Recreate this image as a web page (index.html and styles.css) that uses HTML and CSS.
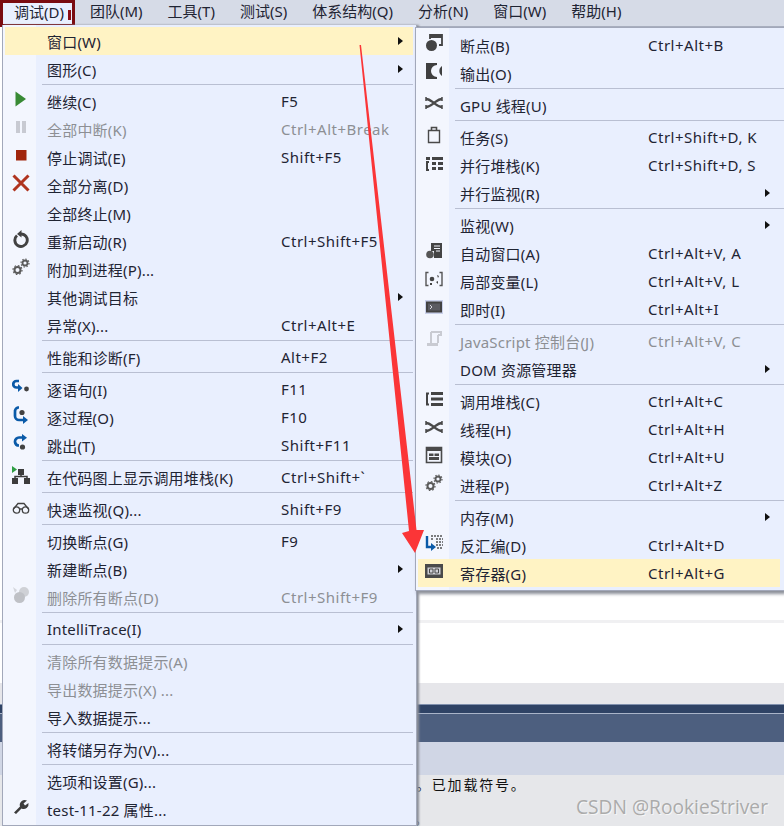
FILE: index.html
```html
<!DOCTYPE html>
<html lang="zh-CN">
<head>
<meta charset="utf-8">
<title>调试菜单</title>
<link rel="stylesheet" href="styles.css">
</head>
<body>
<svg class="defs" width="0" height="0" aria-hidden="true">
  <symbol id="gears" viewBox="0 0 18 18">
    <g fill="none" stroke="#5a5a5a">
      <circle cx="5.5" cy="12" r="3" stroke-width="2"/>
      <circle cx="5.5" cy="12" r="4.5" stroke-width="1.2" stroke-dasharray="1.6 1.9"/>
      <circle cx="13" cy="5" r="2.5" stroke-width="1.8"/>
      <circle cx="13" cy="5" r="4" stroke-width="1.2" stroke-dasharray="1.5 1.6"/>
    </g>
  </symbol>
  <symbol id="threads" viewBox="0 0 18 18">
    <g fill="none" stroke="#4a4a4a" stroke-width="2.300">
      <path d="M1 5c3 0 4 1 8 4s5 4 8 4"/>
      <path d="M1 13c3 0 4-1 8-4s5-4 8-4"/>
    </g>
    <path d="M1 3v4M1 11v4M17 3v4M17 11v4" stroke="#4a4a4a" stroke-width="1.500"/>
  </symbol>
  <symbol id="list" viewBox="0 0 18 18">
    <path d="M6 2h12v3H6zM6 7.5h12v3H6zM6 13h12v3H6z" fill="#444"/>
    <path d="M4 3.5H2v11h2" fill="none" stroke="#444" stroke-width="2"/>
  </symbol>
</svg>

<div class="page">
  <nav class="menubar">
    <span class="tab">调试(D)<i class="tab-mark"></i></span>
    <span>团队(M)</span><span>工具(T)</span><span>测试(S)</span><span>体系结构(Q)</span><span>分析(N)</span><span>窗口(W)</span><span>帮助(H)</span>
  </nav>
  <div class="doc">
    <div class="doc-white"></div>
    <div class="doc-rule"></div>
    <div class="doc-white doc-white-tall"></div>
    <div class="doc-grey"></div>
    <div class="doc-navy"></div>
    <div class="doc-slate"></div>
    <div class="doc-pale"></div>
    <div class="doc-log">
      <p class="log-line">。已加载符号。</p>
      <p class="watermark">CSDN @RookieStriver</p>
      <p class="log-end">。</p>
    </div>
  </div>
</div>

<div class="menu menu-main">
  <div class="row hot"><span class="ic"></span><span class="lb">窗口(W)</span><span class="sc"></span><i class="ar"></i></div>
  <div class="row"><span class="ic"></span><span class="lb">图形(C)</span><span class="sc"></span><i class="ar"></i></div>
  <div class="sep"></div>
  <div class="row"><span class="ic"><svg viewBox="0 0 18 18"><path d="M3.500 1.500 14 9 3.500 16.500z" fill="#388a34"/></svg></span><span class="lb">继续(C)</span><span class="sc">F5</span></div>
  <div class="row off"><span class="ic"><svg viewBox="0 0 18 18"><path d="M4 3h4v12H4zM10 3h4v12h-4z" fill="#c8cad2"/></svg></span><span class="lb">全部中断(K)</span><span class="sc">Ctrl+Alt+Break</span></div>
  <div class="row"><span class="ic"><svg viewBox="0 0 18 18"><path d="M4 4h10.500v10.500H4z" fill="#a1260d"/></svg></span><span class="lb">停止调试(E)</span><span class="sc">Shift+F5</span></div>
  <div class="row"><span class="ic"><svg viewBox="0 0 18 18"><path d="M1.500 1.500 16.500 16.500M16.500 1.500 1.500 16.500" stroke="#b0341f" stroke-width="3" fill="none"/></svg></span><span class="lb">全部分离(D)</span><span class="sc"></span></div>
  <div class="row"><span class="ic"></span><span class="lb">全部终止(M)</span><span class="sc"></span></div>
  <div class="row"><span class="ic"><svg viewBox="0 0 18 18"><path d="M5 5.500a6.200 6.200 0 1 0 4-1.500" fill="none" stroke="#424242" stroke-width="2.900"/><path d="M9.500 0v7.500L5 4z" fill="#424242"/></svg></span><span class="lb">重新启动(R)</span><span class="sc">Ctrl+Shift+F5</span></div>
  <div class="row"><span class="ic"><svg><use href="#gears"/></svg></span><span class="lb">附加到进程(P)...</span><span class="sc"></span></div>
  <div class="row"><span class="ic"></span><span class="lb">其他调试目标</span><span class="sc"></span><i class="ar"></i></div>
  <div class="row"><span class="ic"></span><span class="lb">异常(X)...</span><span class="sc">Ctrl+Alt+E</span></div>
  <div class="sep"></div>
  <div class="row"><span class="ic"></span><span class="lb">性能和诊断(F)</span><span class="sc">Alt+F2</span></div>
  <div class="sep"></div>
  <div class="row"><span class="ic"><svg viewBox="0 0 18 18"><path d="M7 3H4.500a2.500 2.500 0 0 0 0 6.500H8" fill="none" stroke="#0a5aa8" stroke-width="2.700"/><path d="M6 6v8l4.500-4z" fill="#0a5aa8"/><circle cx="14.500" cy="11" r="2.400" fill="#424242"/></svg></span><span class="lb">逐语句(I)</span><span class="sc">F11</span></div>
  <div class="row"><span class="ic"><svg viewBox="0 0 18 18"><path d="M7 1.500H6A4 4 0 0 0 3 6v4a4 4 0 0 0 4 4h5" fill="none" stroke="#0a5aa8" stroke-width="2.700"/><path d="M11 10v8l5-4z" fill="#0a5aa8"/><circle cx="10" cy="6.500" r="2.600" fill="#424242"/></svg></span><span class="lb">逐过程(O)</span><span class="sc">F10</span></div>
  <div class="row"><span class="ic"><svg viewBox="0 0 18 18"><path d="M12 3.500H7a4 4 0 0 0-4 4v.500a4 4 0 0 0 4 3.500" fill="none" stroke="#0a5aa8" stroke-width="2.700"/><path d="M10 0v7.500l5-3.700z" fill="#0a5aa8"/><circle cx="10.500" cy="13" r="2.600" fill="#424242"/></svg></span><span class="lb">跳出(T)</span><span class="sc">Shift+F11</span></div>
  <div class="sep"></div>
  <div class="row"><span class="ic"><svg viewBox="0 0 18 18"><path d="M6 3h6v6H6zM0 12h6v6H0zM12 12h6v6h-6z" fill="#3c3c3c"/><path d="M9 8v2M3 13v-2.500h12V13" stroke="#3c3c3c" stroke-width="1.500" fill="none"/><path d="M0 0v7l5-3.500z" fill="#2f9e44"/></svg></span><span class="lb">在代码图上显示调用堆栈(K)</span><span class="sc">Ctrl+Shift+`</span></div>
  <div class="sep"></div>
  <div class="row"><span class="ic"><svg viewBox="0 0 18 18"><circle cx="4.500" cy="12" r="3.200" fill="none" stroke="#424242" stroke-width="1.300"/><circle cx="13.500" cy="12" r="3.200" fill="none" stroke="#424242" stroke-width="1.300"/><path d="M7.500 11h3M1.500 11 6 5.500h6l4.500 5.500" fill="none" stroke="#424242" stroke-width="1.300"/></svg></span><span class="lb">快速监视(Q)...</span><span class="sc">Shift+F9</span></div>
  <div class="sep"></div>
  <div class="row"><span class="ic"></span><span class="lb">切换断点(G)</span><span class="sc">F9</span></div>
  <div class="row"><span class="ic"></span><span class="lb">新建断点(B)</span><span class="sc"></span><i class="ar"></i></div>
  <div class="row off"><span class="ic"><svg viewBox="0 0 18 18"><circle cx="12" cy="6" r="5" fill="#cfd1d6"/><circle cx="7.500" cy="11.500" r="5.500" fill="#bfc1c6"/><path d="M1 1l4 3-2 3z" fill="#d4d6dc"/></svg></span><span class="lb">删除所有断点(D)</span><span class="sc">Ctrl+Shift+F9</span></div>
  <div class="sep"></div>
  <div class="row"><span class="ic"></span><span class="lb">IntelliTrace(I)</span><span class="sc"></span><i class="ar"></i></div>
  <div class="sep"></div>
  <div class="row off"><span class="ic"></span><span class="lb">清除所有数据提示(A)</span><span class="sc"></span></div>
  <div class="row off"><span class="ic"></span><span class="lb">导出数据提示(X) ...</span><span class="sc"></span></div>
  <div class="row"><span class="ic"></span><span class="lb">导入数据提示...</span><span class="sc"></span></div>
  <div class="sep"></div>
  <div class="row"><span class="ic"></span><span class="lb">将转储另存为(V)...</span><span class="sc"></span></div>
  <div class="sep"></div>
  <div class="row"><span class="ic"></span><span class="lb">选项和设置(G)...</span><span class="sc"></span></div>
  <div class="row"><span class="ic"><svg viewBox="0 0 18 18"><path d="M2 14.500 8 8.500A5 5 0 0 1 15 2.500L11.500 5.500l1.500 2L16.500 5a5 5 0 0 1-7 5.500L4 16z" fill="#3c3c3c"/></svg></span><span class="lb">test-11-22 属性...</span><span class="sc"></span></div>
</div>

<div class="menu menu-sub">
  <div class="row"><span class="ic"><svg viewBox="0 0 18 18"><path d="M5 5V1h12v10h-3" fill="none" stroke="#444" stroke-width="1.800"/><path d="M5 2h12v2H5z" fill="#444"/><circle cx="6.500" cy="11.500" r="5.500" fill="#444"/></svg></span><span class="lb">断点(B)</span><span class="sc">Ctrl+Alt+B</span></div>
  <div class="row"><span class="ic"><svg viewBox="0 0 18 18"><path d="M1 1h11v2a6 6 0 0 0 0 12v2H1z" fill="#3f3f3f"/><path d="M17 4v10a6 6 0 0 1 0-10z" fill="#3f3f3f"/></svg></span><span class="lb">输出(O)</span><span class="sc"></span></div>
  <div class="sep"></div>
  <div class="row"><span class="ic"><svg><use href="#threads"/></svg></span><span class="lb">GPU 线程(U)</span><span class="sc"></span></div>
  <div class="sep"></div>
  <div class="row"><span class="ic"><svg viewBox="0 0 18 18"><path d="M3.500 4.500h11v12h-11z" fill="#f3f6fe" stroke="#4a4a4a" stroke-width="1.400"/><path d="M6.500 4.500V1.500h5v3" fill="none" stroke="#4a4a4a" stroke-width="1.600"/></svg></span><span class="lb">任务(S)</span><span class="sc">Ctrl+Shift+D, K</span></div>
  <div class="row"><span class="ic"><svg viewBox="0 0 18 18"><path d="M1 3h4v3H1zM7 3h11v3H7zM7 8h4v3H7zM13 8h5v3h-5zM7 13h4v3H7zM13 13h5v3h-5z" fill="#444"/><path d="M4 8H2v8h2" fill="none" stroke="#444" stroke-width="2"/></svg></span><span class="lb">并行堆栈(K)</span><span class="sc">Ctrl+Shift+D, S</span></div>
  <div class="row"><span class="ic"></span><span class="lb">并行监视(R)</span><span class="sc"></span><i class="ar"></i></div>
  <div class="sep"></div>
  <div class="row"><span class="ic"></span><span class="lb">监视(W)</span><span class="sc"></span><i class="ar"></i></div>
  <div class="row"><span class="ic"><svg viewBox="0 0 18 18"><path d="M6 1h11v15H9V9H6z" fill="#444"/><path d="M9 4h6M9 6.500h6M11 9h4" stroke="#f3f6fe" stroke-width="1"/><circle cx="5" cy="12.500" r="3.800" fill="#555"/></svg></span><span class="lb">自动窗口(A)</span><span class="sc">Ctrl+Alt+V, A</span></div>
  <div class="row"><span class="ic"><svg viewBox="0 0 18 18"><path d="M3.500 2.500H1v13h2.500M14.500 2.500H17v13h-2.500" fill="none" stroke="#555" stroke-width="1.400"/><circle cx="7" cy="9" r="2.300" fill="#444"/><path d="M12 5l2 1-1 2zM11 12l2-1v3zM5 13h2v2H5z" fill="#444"/></svg></span><span class="lb">局部变量(L)</span><span class="sc">Ctrl+Alt+V, L</span></div>
  <div class="row"><span class="ic"><svg viewBox="0 0 18 18"><path d="M0 2h18v14H0z" fill="#c9d0ea"/><path d="M1 3.500h16v11H1z" fill="#424242"/><path d="M3 5.500h12v7H3z" fill="#5b5b62"/><path d="m5 7 2 2-2 2" fill="none" stroke="#d8d8e0"/></svg></span><span class="lb">即时(I)</span><span class="sc">Ctrl+Alt+I</span></div>
  <div class="sep"></div>
  <div class="row off"><span class="ic"><svg viewBox="0 0 18 18"><path d="M6 2h10v3h-3M6 2v11M13 5v8" fill="none" stroke="#c9cbd2" stroke-width="2"/><path d="M2 13h11v3H2z" fill="#c9cbd2"/></svg></span><span class="lb">JavaScript 控制台(J)</span><span class="sc">Ctrl+Alt+V, C</span></div>
  <div class="row"><span class="ic"></span><span class="lb">DOM 资源管理器</span><span class="sc"></span><i class="ar"></i></div>
  <div class="sep"></div>
  <div class="row"><span class="ic"><svg><use href="#list"/></svg></span><span class="lb">调用堆栈(C)</span><span class="sc">Ctrl+Alt+C</span></div>
  <div class="row"><span class="ic"><svg><use href="#threads"/></svg></span><span class="lb">线程(H)</span><span class="sc">Ctrl+Alt+H</span></div>
  <div class="row"><span class="ic"><svg viewBox="0 0 18 18"><path d="M1.500 1.500h15v15h-15z" fill="none" stroke="#4a4a4a" stroke-width="1.600"/><path d="M1 1h16v4H1zM4 7.500h4.500V10H4zM9.500 7.500H14V10H9.500zM4 11h10v3H4z" fill="#4a4a4a"/></svg></span><span class="lb">模块(O)</span><span class="sc">Ctrl+Alt+U</span></div>
  <div class="row"><span class="ic"><svg><use href="#gears"/></svg></span><span class="lb">进程(P)</span><span class="sc">Ctrl+Alt+Z</span></div>
  <div class="sep"></div>
  <div class="row"><span class="ic"></span><span class="lb">内存(M)</span><span class="sc"></span><i class="ar"></i></div>
  <div class="row"><span class="ic"><svg viewBox="0 0 18 18"><path d="M2 2v11h5" fill="none" stroke="#0a5aa8" stroke-width="2.400"/><path d="M6 9v8l5-4z" fill="#0a5aa8"/><path d="M6 2h12M6 5h3M11 5h7M11 8h7M11 11h7M12 14h6" stroke="#555" stroke-width="1.300" stroke-dasharray="2 1" fill="none"/></svg></span><span class="lb">反汇编(D)</span><span class="sc">Ctrl+Alt+D</span></div>
  <div class="row hot"><span class="ic"><svg viewBox="0 0 18 18"><path d="M0 2h18v14H0z" fill="#4a4a4a"/><path d="M2.500 5.500h13v7h-13z" fill="#cfd0d6"/><path d="M4.500 7h3.500v4H4.500zM10 7h3.500v4H10z" fill="none" stroke="#4a4a4a"/></svg></span><span class="lb">寄存器(G)</span><span class="sc">Ctrl+Alt+G</span></div>
</div>

<svg class="arrow" viewBox="0 0 784 826" aria-hidden="true">
  <path d="M359.500 45 361 45 416.500 530 424 530 415 553 402 533 409 531z" fill="#fb3537"/>
</svg>
</body>
</html>
```

FILE: styles.css
```css
* { box-sizing: border-box; }
html, body { margin: 0; height: 100%; overflow: hidden; }
body {
  position: relative;
  width: 784px;
  height: 826px;
  background: #e6e7ea;
  font-family: "Noto Sans", "Noto Sans CJK SC", sans-serif;
  font-size: 15px;
  color: #1f2433;
}
.defs { position: absolute; }
.page { display: flex; flex-direction: column; height: 826px; }

.menubar {
  display: flex;
  gap: 25px;
  align-items: flex-start;
  height: 27px;
  background: #d6dbe7;
  border-bottom: 1px solid #a9afbf;
  flex: none;
}
.menubar span { line-height: 23px; white-space: nowrap; }
.menubar .tab {
  position: relative;
  width: 75px;
  height: 27px;
  margin-right: -10px;
  padding-left: 11px;
  line-height: 18px;
  background: #e9effe;
  border: 3px solid #7a0b10;
}
.tab-mark {
  position: absolute;
  left: 65px;
  top: 7px;
  width: 3px;
  height: 10px;
  background: #8a0d14;
}

.doc { display: flex; flex-direction: column; flex: 1; }
.doc-white { height: 593px; background: #fff; }
.doc-rule { height: 3px; background: #f0f0f2; }
.doc-white-tall { height: 60px; }
.doc-grey { height: 21px; background: #e6e6ea; }
.doc-navy { height: 10px; background: #2f4365; border-top: 1px solid #8090ad; border-bottom: 1px solid #a9b4c9; }
.doc-slate { height: 28px; background: #4d5f7f; }
.doc-pale { height: 33px; background: #d0d6e5; }
.doc-log { flex: 1; position: relative; background: #e6e7ea; color: #111; font-family: "Noto Sans CJK SC", sans-serif; font-size: 14px; }
.log-line { position: absolute; left: 416px; top: -1px; margin: 0; line-height: 20px; letter-spacing: 1.800px; }
.log-end { position: absolute; left: 414px; top: 35px; margin: 0; line-height: 16px; }
.watermark {
  position: absolute;
  right: 16px;
  top: 19px;
  margin: 0;
  font-family: "Open Sans", sans-serif;
  font-size: 19.200px;
  line-height: 26px;
  color: #ababab;
  text-shadow: 1px 1px 0 #f6f6f6;
}

.menu {
  position: absolute;
  display: flex;
  flex-direction: column;
  border: 1px solid #a2a8ba;
  background: linear-gradient(90deg, #f3f6fe 0 33px, #e9effe 33px);
  overflow: hidden;
}
.menu-main {
  left: 2px;
  top: 25px;
  width: 415px;
  height: 801px;
  padding-top: 2px;
  border-top: 0;
  box-shadow: 2px 0 2px #8b8f99;
}
.menu-sub {
  left: 415px;
  top: 27px;
  width: 369px;
  height: 564px;
  padding-top: 3px;
  border-right: 0;
  box-shadow: 2px 3px 3px #8b8f99;
}

.row {
  display: flex;
  align-items: center;
  flex: none;
  height: 28px;
  margin-left: 2px;
  width: 408px;
  white-space: nowrap;
}
.menu-sub .row { width: 362px; }
.hot { background: #fff3c4; }
.off { color: #8d8f94; }
.ic { display: flex; align-items: center; justify-content: center; flex: none; width: 31px; height: 28px; padding-bottom: 4px; }
.ic svg { width: 18px; height: 18px; display: block; }
.lb { flex: none; width: 234px; margin-left: 11px; letter-spacing: .2px; }
.menu-sub .lb { width: 188px; }
.sc { flex: 1; letter-spacing: .5px; }
.ar {
  flex: none;
  width: 0;
  height: 0;
  margin-right: 10px;
  border-left: 5px solid #111;
  border-top: 4.500px solid transparent;
  border-bottom: 4.500px solid transparent;
}
.sep { flex: none; height: 1px; margin: 1px 0 2px 39px; width: 371px; background: #b9bfd2; }
.menu-sub .sep { width: 329px; }

.arrow { position: absolute; left: 0; top: 0; width: 784px; height: 826px; pointer-events: none; }
```
